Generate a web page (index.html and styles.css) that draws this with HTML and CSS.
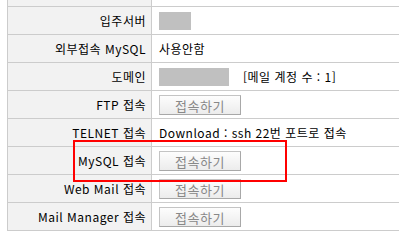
FILE: index.html
```html
<!DOCTYPE html>
<html lang="ko">
<head>
    <meta charset="UTF-8">
    <title>서버 정보</title>
    <link rel="stylesheet" href="styles.css">
</head>
<body>
    <div class="wrap">
        <table class="info">
            <tr class="cut">
                <th></th>
                <td></td>
            </tr>
            <tr>
                <th>입주서버</th>
                <td><span class="mask mask-sm"></span></td>
            </tr>
            <tr>
                <th>외부접속 MySQL</th>
                <td>사용안함</td>
            </tr>
            <tr>
                <th>도메인</th>
                <td><span class="mask mask-lg"></span><span class="count">[메일 계정 수 : 1]</span></td>
            </tr>
            <tr>
                <th>FTP 접속</th>
                <td><button class="btn" type="button">접속하기</button></td>
            </tr>
            <tr>
                <th>TELNET 접속</th>
                <td>Download : ssh 22번 포트로 접속</td>
            </tr>
            <tr>
                <th>MySQL 접속</th>
                <td><button class="btn" type="button">접속하기</button></td>
            </tr>
            <tr>
                <th>Web Mail 접속</th>
                <td><button class="btn" type="button">접속하기</button></td>
            </tr>
            <tr>
                <th>Mail Manager 접속</th>
                <td><button class="btn" type="button">접속하기</button></td>
            </tr>
        </table>
        <div class="mark"></div>
    </div>
</body>
</html>
```

FILE: styles.css
```css
body {
    margin: 0;
    background: #fff;
    color: #000;
    font-family: "Noto Sans CJK KR", "Noto Sans", sans-serif;
    font-size: 12px;
    overflow: hidden;
}
.wrap {
    position: relative;
    padding-left: 7px;
}
.info {
    width: 400px;
    border-collapse: collapse;
}
.info th,
.info td {
    height: 27px;
    padding: 0;
    border: 1px solid #cccccc;
    line-height: 14px;
    letter-spacing: 0.5px;
    white-space: nowrap;
}
.info th {
    width: 138px;
    padding-right: 5px;
    background: #f2f2f2;
    font-weight: normal;
    text-align: right;
}
.info td {
    padding-left: 7px;
    text-align: left;
}
.info .cut th,
.info .cut td {
    height: 6px;
    border-top: none;
}
.mask {
    display: inline-block;
    height: 18px;
    background: #c0c0c0;
    vertical-align: middle;
}
.mask-sm {
    width: 32px;
}
.mask-lg {
    width: 70px;
}
.count {
    margin-left: 14px;
    vertical-align: middle;
}
.btn {
    width: 82px;
    height: 20px;
    padding: 0;
    margin: 0;
    border: 1px solid #c4c4c4;
    border-right-color: #a8a8a8;
    border-bottom-color: #a8a8a8;
    background: linear-gradient(#fdfdfd, #ececec);
    color: #888;
    font-family: inherit;
    font-size: 13px;
    letter-spacing: 0.5px;
    vertical-align: middle;
}
.mark {
    position: absolute;
    left: 73px;
    top: 140px;
    width: 210px;
    height: 38px;
    border: 2px solid #ff0000;
}
```
